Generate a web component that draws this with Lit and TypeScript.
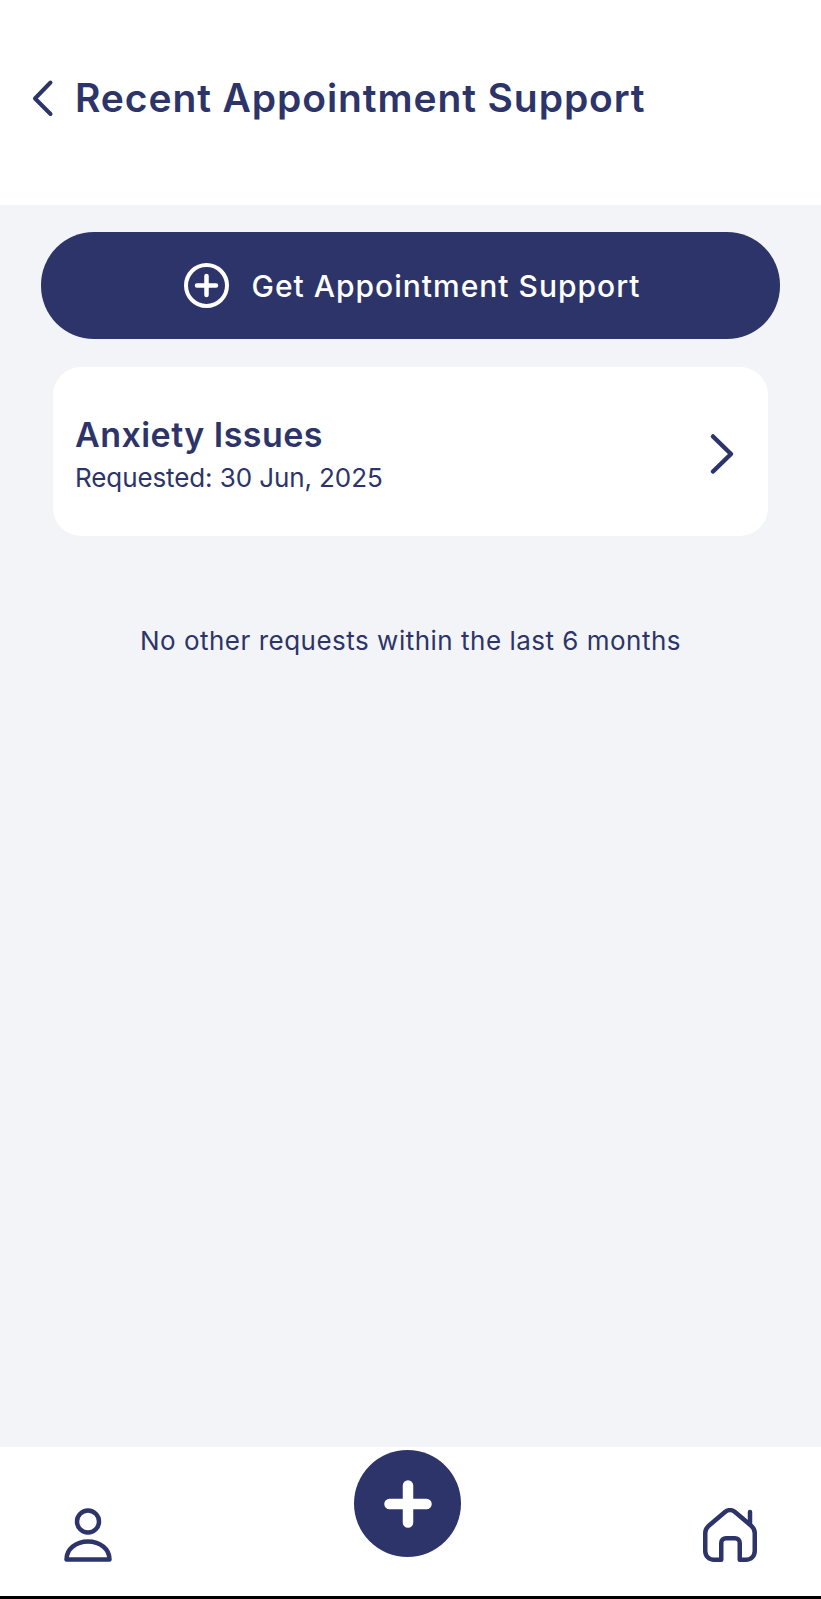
import { LitElement, html, css } from "lit";
import { customElement } from "lit/decorators.js";

@customElement("app-root")
export class AppRoot extends LitElement {
  static styles = css`
    :host { display: block; font-family: "Inter", "Liberation Sans", sans-serif; color: #2d3469; }
    .page { height: 1599px; display: flex; flex-direction: column; background: #f2f4f8; box-sizing: border-box; overflow: hidden; }
    .header { height: 205px; flex: none; background: #fff; display: flex; align-items: center; padding: 0 0 9px 30px; box-sizing: border-box; gap: 15px; }
    .back { width: 30px; height: 40px; flex: none; display: block; }
    .title { margin: 0; font-size: 39px; font-weight: 600; line-height: 1.2; letter-spacing: 0.9px; white-space: nowrap; }
    .main { flex: 1; display: flex; flex-direction: column; padding: 27px 41px 0; }
    .cta { height: 107px; flex: none; border: 0; border-radius: 53px; background: #2d3469; color: #fff; display: flex; align-items: center; justify-content: center; gap: 22px; font: 500 30px "Inter", sans-serif; letter-spacing: 1px; padding: 0 0 0 4px; }
    .cta svg { width: 45px; height: 45px; display: block; }
    .card { height: 169px; flex: none; margin: 28px 12px 0; background: #fff; border-radius: 28px; display: flex; align-items: center; justify-content: space-between; padding: 0 30px 0 22px; box-sizing: border-box; }
    .card-text { padding-top: 7px; }
    .card-name { font-size: 34px; font-weight: 600; line-height: 40px; letter-spacing: 0.45px; }
    .card-date { font-size: 26px; font-weight: 400; line-height: 34px; margin-top: 6px; letter-spacing: -0.1px; }
    .chev { width: 30px; height: 46px; display: block; margin-top: 5px; }
    .note { margin: 88px 0 0; text-align: center; font-size: 26px; font-weight: 400; line-height: 34px; letter-spacing: 0.5px; }
    .nav { height: 152px; flex: none; background: #fff; border-bottom: 3px solid #000; box-sizing: border-box; display: flex; align-items: flex-start; justify-content: space-between; padding: 3px 64px 0 64px; }
    .nav-person { width: 48px; height: 54px; margin-top: 58px; display: block; }
    .nav-home { width: 54px; height: 54px; margin-top: 58px; display: block; }
    .fab { width: 107px; height: 107px; border-radius: 50%; background: #2d3469; border: 0; padding: 0; display: flex; align-items: center; justify-content: center; }
    .fab svg { width: 48px; height: 48px; display: block; }
  `;

  render() {
    return html`
      <div class="page">
        <header class="header">
          <svg class="back" viewBox="0 0 30 40" fill="none" stroke="#2d3469" stroke-width="4" stroke-linecap="round" stroke-linejoin="round"><path d="M20.500 4.500 L5 20.500 L20.500 36"/></svg>
          <h1 class="title">Recent Appointment Support</h1>
        </header>
        <main class="main">
          <button class="cta">
            <svg viewBox="0 0 45 45" fill="none" stroke="#fff" stroke-linecap="round"><circle cx="22.500" cy="22.500" r="20.500" stroke-width="4"/><path d="M22.500 13v19M13 22.500h19" stroke-width="4.500"/></svg>
            <span>Get Appointment Support</span>
          </button>
          <section class="card">
            <div class="card-text">
              <div class="card-name">Anxiety Issues</div>
              <div class="card-date">Requested: 30 Jun, 2025</div>
            </div>
            <svg class="chev" viewBox="0 0 30 46" fill="none" stroke="#2d3469" stroke-width="4.500" stroke-linecap="round" stroke-linejoin="round"><path d="M5 5.500 L23 23 L5 40.500" /></svg>
          </section>
          <p class="note">No other requests within the last 6 months</p>
        </main>
        <nav class="nav">
          <svg class="nav-person" viewBox="0 0 48 54" fill="none" stroke="#2d3469" stroke-width="4.500" stroke-linejoin="round"><circle cx="24" cy="13.500" r="11"/><path d="M2.500 51.500 H45.500 C45.500 41 36 33.500 24 33.500 C12 33.500 2.500 41 2.500 51.500 Z"/></svg>
          <button class="fab"><svg viewBox="0 0 48 48" fill="none" stroke="#fff" stroke-width="10.500" stroke-linecap="round"><path d="M24 5.500v37M5.500 24h37"/></svg></button>
          <svg class="nav-home" viewBox="0 0 54 54" fill="none" stroke="#2d3469" stroke-width="4.500" stroke-linecap="round" stroke-linejoin="round"><path d="M18.250 51.750 H11 C6 51.750 2.250 48 2.250 43 V25 C2.250 22 3.500 20 5.500 18 L22 4 C25 1.500 29 1.500 32 4 L48.500 18 C50.500 20 51.750 22 51.750 25 V43 C51.750 48 48 51.750 43 51.750 H36.750 V35 C36.750 32 34.500 30.250 32 30.250 H23 C20.500 30.250 18.250 32 18.250 35 Z"/><path d="M47 4 V15"/></svg>
        </nav>
      </div>
    `;
  }
}
